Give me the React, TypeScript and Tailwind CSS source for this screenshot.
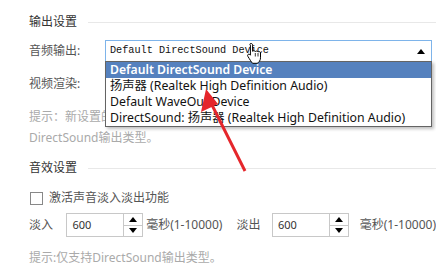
const cn = '"Noto Sans", "Noto Sans CJK SC", sans-serif';

function SectionTitle({ title }: { title: string }) {
  return (
    <div className="flex h-[16px] items-center gap-[11px]">
      <span className="text-[12px] leading-[16px] text-[#333]">{title}</span>
      <div className="h-px flex-1 bg-[#e8e8e8]" />
    </div>
  );
}

function Spin({ value }: { value: string }) {
  return (
    <div className="flex h-[24px] w-[78px] border border-[#c8c8c8] bg-white">
      <div className="flex-1 pl-[5px] text-[11px] leading-[22px] text-[#333]">{value}</div>
      <div className="flex w-[19px] flex-col border-l border-[#c8c8c8]">
        <div className="flex flex-1 items-center justify-center border-b border-[#c8c8c8]">
          <span className="block h-0 w-0 border-x-[4px] border-b-[5px] border-x-transparent border-b-black" />
        </div>
        <div className="flex flex-1 items-center justify-center">
          <span className="block h-0 w-0 border-x-[4px] border-t-[5px] border-x-transparent border-t-black" />
        </div>
      </div>
    </div>
  );
}

export default function App() {
  const items = [
    'Default DirectSound Device',
    '扬声器 (Realtek High Definition Audio)',
    'Default WaveOut Device',
    'DirectSound: 扬声器 (Realtek High Definition Audio)',
  ];
  return (
    <div className="relative h-[266px] w-[436px] overflow-hidden bg-white pl-[29px] pt-[14px]" style={{ fontFamily: cn }}>
      <SectionTitle title="输出设置" />
      <div className="mt-[10px] flex h-[22px] items-center">
        <span className="w-[76px] text-[12px] text-[#555]">音频输出:</span>
        <div className="mr-[4px] flex h-[22px] flex-1 items-center justify-between border border-[#7eb4ea] pl-[4px] pr-[6px]">
          <span className="text-[10.2px] text-[#111]" style={{ fontFamily: '"Liberation Mono", monospace' }}>Default DirectSound Device</span>
          <span className="block h-0 w-0 border-x-[4px] border-b-[5px] border-x-transparent border-b-black" />
        </div>
      </div>
      <div className="mt-[11px] flex h-[22px] items-center">
        <span className="w-[76px] text-[12px] text-[#555]">视频渲染:</span>
        <div className="mr-[4px] h-[22px] flex-1 border border-[#c8c8c8]" />
      </div>
      <div className="mt-[11px] text-[12px] leading-[21px] text-[#aaa]">
        {/* the rest of this line sits under the open list */}
        <div className="w-[77px] overflow-hidden whitespace-nowrap">提示：新设置的视频</div>
        <div>DirectSound输出类型。</div>
      </div>
      <div className="mt-[12px]">
        <SectionTitle title="音效设置" />
      </div>
      <div className="mt-[12px] flex h-[20px] items-center gap-[6px]">
        <span className="ml-px block h-[13px] w-[13px] border border-[#888]" />
        <span className="text-[12px] text-[#555]">激活声音淡入淡出功能</span>
      </div>
      <div className="mt-[5px] flex h-[24px] items-center text-[12px] text-[#555]">
        <span className="w-[38px]">淡入</span>
        <Spin value="600" />
        <span className="ml-[3px] w-[92px] whitespace-nowrap">毫秒(1-10000)</span>
        <span className="w-[36px]">淡出</span>
        <Spin value="600" />
        <span className="ml-[11px] whitespace-nowrap">毫秒(1-10000)</span>
      </div>
      <div className="mt-[11px] text-[12px] leading-[20px] text-[#aaa]">提示:仅支持DirectSound输出类型。</div>

      {/* dropdown list */}
      <div className="absolute left-[105px] top-[61px] w-[327px] border border-[#646464] bg-white shadow-[2px_2px_3px_rgba(0,0,0,0.25)]">
        {items.map((item, i) => (
          <div
            key={item}
            className={
              i === 0
                ? 'h-[16px] bg-[#5581be] pl-[4px] text-[12.2px] font-semibold leading-[16px] text-white'
                : 'h-[16px] pl-[4px] text-[12.3px] leading-[16px] text-[#111]'
            }
          >
            {item}
          </div>
        ))}
      </div>

      {/* red arrow */}
      <svg className="absolute left-0 top-0" width="436" height="266" viewBox="0 0 436 266">
        <line x1="245" y1="171" x2="211" y2="103" stroke="#e5262b" strokeWidth="3" />
        <polygon points="206,89 201,112 218,104" fill="#e5262b" />
      </svg>

      {/* hand cursor */}
      <svg className="absolute left-[246px] top-[42px]" width="18" height="22" viewBox="0 0 18 22">
        <path
          d="M5 1.5c1 0 1.6.6 1.6 1.6v6.2c.4-.8 2.4-.8 2.7.3.4-.8 2.4-.8 2.7.4.5-.7 2.5-.6 2.5.8v5c0 2.6-1.6 4.7-3.3 5.5H6.6C5 19.7 3.6 17 2 14.6c-.8-1.2-.4-2.4.8-2.4.7 0 1.2.5 1.6 1V3.1C3.4 2.1 4 1.5 5 1.5z"
          fill="#fff"
          stroke="#000"
          strokeWidth="1"
        />
        <path d="M9.3 11v3.5M12 11v3.5M14.5 11v3.5" stroke="#000" strokeWidth="0.8" />
      </svg>
    </div>
  );
}
